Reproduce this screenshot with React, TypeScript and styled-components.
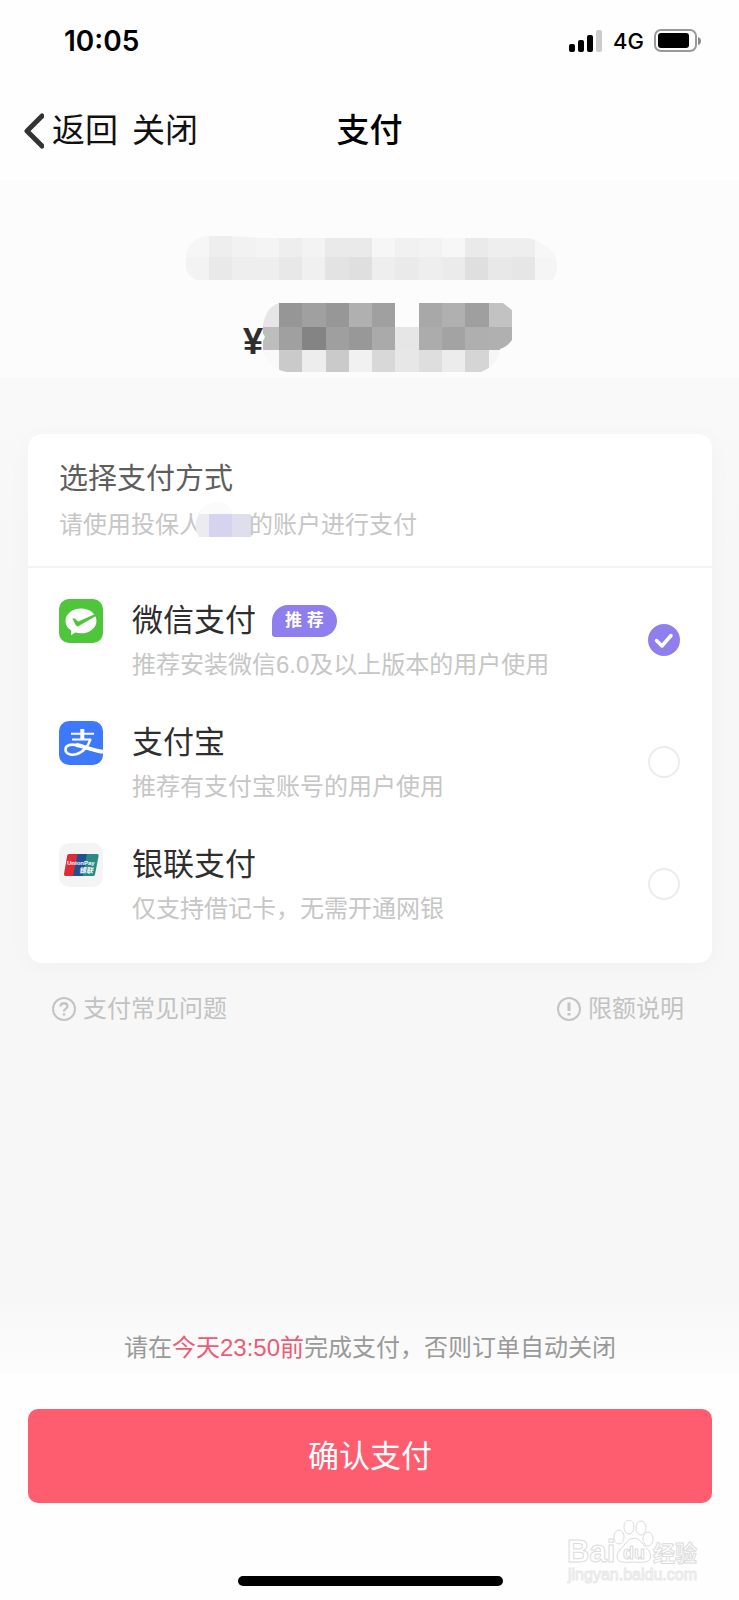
import React, { useState } from "react";
import styled, { createGlobalStyle } from "styled-components";

const GlobalStyle = createGlobalStyle`
  * { box-sizing: border-box; }
  body {
    margin: 0;
    background: #fefefe;
    font-family: "Liberation Sans", "Noto Sans CJK SC", sans-serif;
    color: #2e2e2e;
  }
  h1, h2, p { margin: 0; font-weight: 400; }
`;

const Page = styled.div`
  position: relative;
  display: flex;
  flex-direction: column;
  min-height: 100vh;
`;

const StatusBar = styled.div`
  display: flex;
  align-items: center;
  justify-content: space-between;
  height: 82px;
  padding: 0 38px 0 64px;
  color: #000;
  font-family: Inter, sans-serif;
`;

const Clock = styled.time`
  font-size: 28px;
  line-height: 32px;
  font-weight: 600;
`;

const StatusIcons = styled.div`
  display: flex;
  align-items: center;
  gap: 10px;
  font-size: 22px;
  line-height: 32px;
  font-weight: 500;
`;

const NavBar = styled.nav`
  display: grid;
  grid-template-columns: 1fr auto 1fr;
  align-items: center;
  height: 98px;
  padding: 0 24px;
  color: #111;
`;

const NavActions = styled.div`
  display: flex;
  gap: 14px;
`;

const NavButton = styled.button`
  display: flex;
  align-items: center;
  gap: 8px;
  padding: 0;
  border: 0;
  background: none;
  color: inherit;
  font: inherit;
  font-size: 33px;
  line-height: 48px;
`;

const Title = styled.h1`
  font-size: 33px;
  line-height: 48px;
  font-weight: 500;
  color: #000;
`;

const Summary = styled.header`
  display: flex;
  flex-direction: column;
  align-items: center;
  gap: 17px;
  height: 198px;
  padding: 56px 0 0 3px;
  background: #fcfcfc;
  > * { flex: none; }
`;

const Amount = styled.div`
  display: flex;
  align-items: center;
  padding-right: 12px;
  margin-left: 25px;
  font-size: 36px;
  line-height: 70px;
  font-weight: 700;
  span { padding-top: 10px; }
`;

const Body = styled.main`
  display: flex;
  flex: 1;
  flex-direction: column;
  padding: 56px 27px 0 28px;
  background: linear-gradient(#f9f9f9, #f7f7f7 20%, #f7f7f7 92%, #fcfcfc);
`;

const Card = styled.section`
  border-radius: 14px;
  background: #fff;
  box-shadow: 0 4px 24px rgba(0, 0, 0, 0.03);
`;

const CardHead = styled.div`
  height: 134px;
  padding: 22px 31px 0;
  border-bottom: 2px solid #f3f3f3;
`;

const CardTitle = styled.h2`
  font-size: 29px;
  line-height: 46px;
  color: #5e5e5e;
`;

const Hint = styled.p`
  display: flex;
  align-items: center;
  font-size: 24px;
  line-height: 44px;
  color: #c6c6c6;
`;

const NameMask = styled.svg`
  flex: none;
  margin: 0 -6px 0 -8px;
`;

const MethodList = styled.div`
  padding: 11px 0 18px;
`;

const MethodRow = styled.label`
  display: flex;
  align-items: flex-start;
  height: 122px;
  padding: 20px 32px 0 31px;
`;

const MethodText = styled.span`
  display: flex;
  flex: 1;
  flex-direction: column;
  margin-left: 29px;
`;

const MethodName = styled.span`
  display: flex;
  align-items: center;
  gap: 16px;
  font-size: 31px;
  line-height: 44px;
  color: #2e2e2e;
`;

const MethodNote = styled.span`
  font-size: 24px;
  line-height: 44px;
  color: #c6c6c6;
`;

const Badge = styled.span`
  padding: 0 13px;
  border-radius: 16px 16px 16px 3px;
  background: #8f7fee;
  color: #fff;
  font-size: 17px;
  line-height: 32px;
  font-weight: 700;
`;

const RadioBox = styled.span`
  display: grid;
  align-self: flex-start;
  margin-top: 25px;
  > * { grid-area: 1 / 1; }
  svg { pointer-events: none; }
`;

const Radio = styled.input`
  appearance: none;
  width: 32px;
  height: 32px;
  margin: 0;
  border: 2px solid #ececec;
  border-radius: 50%;
  background: #fff;
  &:checked {
    border-color: #8f7fee;
    background: #8f7fee;
  }
`;

const HelpLinks = styled.div`
  display: flex;
  justify-content: space-between;
  padding: 24px 28px 0 24px;
`;

const HelpLink = styled.a`
  display: flex;
  align-items: center;
  gap: 7px;
  color: #c2c2c2;
  font-size: 24px;
  line-height: 44px;
  text-decoration: none;
`;

const Notice = styled.p`
  margin-top: auto;
  padding-bottom: 8px;
  text-align: center;
  font-size: 24px;
  line-height: 36px;
  color: #999;
  strong {
    font-weight: 400;
    color: #ee5b72;
  }
`;

const Footer = styled.footer`
  display: flex;
  flex-direction: column;
  align-items: center;
  gap: 73px;
  padding: 35px 27px 14px 28px;
`;

const PayButton = styled.button`
  width: 100%;
  height: 94px;
  padding: 2px 0 0;
  border: 0;
  border-radius: 10px;
  background: #fe5d70;
  color: #fff;
  font: inherit;
  font-size: 31px;
  line-height: 44px;
`;

const HomeIndicator = styled.div`
  width: 265px;
  height: 10px;
  border-radius: 5px;
  background: #000;
`;

const Watermark = styled.svg`
  position: absolute;
  right: 34px;
  bottom: 10px;
`;

const CELL = 23;

type MosaicProps = {
  width: number;
  height: number;
  lead: number;
  rows: { y: number; h: number; cells: string[] }[];
  outline: string;
  id: string;
};

function Mosaic({ width, height, lead, rows, outline, id }: MosaicProps) {
  return (
    <svg width={width} height={height} viewBox={`0 0 ${width} ${height}`} aria-hidden="true" shapeRendering="crispEdges">
      <clipPath id={id}>
        <path d={outline} />
      </clipPath>
      <g clipPath={`url(#${id})`}>
        {rows.map((row) =>
          row.cells.map((fill, i) => (
            <rect
              key={`${row.y}-${i}`}
              x={i === 0 ? 0 : lead + (i - 1) * (CELL + 0.28)}
              y={row.y}
              width={CELL + 1}
              height={row.h}
              fill={fill}
            />
          ))
        )}
      </g>
    </svg>
  );
}

const productRows = [
  { y: 0, h: 21, cells: ["#f6f6f6", "#eeeeee", "#f2f2f2", "#f4f4f4", "#eeeeee", "#f3f3f3", "#eaeaea", "#eaeaea", "#f6f6f6", "#f1f1f1", "#f3f3f3", "#f7f7f7", "#eaeaea", "#eeeeee", "#eeeeee", "#f7f7f7"] },
  { y: 21, h: 24, cells: ["#f3f3f3", "#e9e9e9", "#eeeeee", "#eeeeee", "#e8e8e8", "#f0f0f0", "#e3e3e3", "#dfdfdf", "#eeeeee", "#eaeaea", "#eeeeee", "#ebebeb", "#dfdfdf", "#e8e8e8", "#e6e6e6", "#f5f5f5"] },
];

const priceRows = [
  { y: 0, h: 24, cells: ["#e6e6e6", "#969696", "#a0a0a0", "#979797", "#b0b0b0", "#a0a0a0", "#fcfcfc", "#a8a8a8", "#b0b0b0", "#9f9f9f", "#c2c2c2"] },
  { y: 24, h: 23, cells: ["#bdbdbd", "#a0a0a0", "#848484", "#9f9f9f", "#989898", "#aaaaaa", "#e6e6e6", "#acacac", "#a3a3a3", "#afafaf", "#b0b0b0"] },
  { y: 47, h: 23, cells: ["#f9f9f9", "#cacaca", "#ededed", "#cacaca", "#f1f1f1", "#d8d8d8", "#e7e7e7", "#dedede", "#ececec", "#d5d5d5", "#f6f6f6"] },
];

const WechatIcon = () => (
  <svg width="44" height="44" viewBox="0 0 44 44" aria-hidden="true">
    <rect width="44" height="44" rx="10" fill="#4fc53c" />
    <path d="M22 9.5c8.600 0 15.500 5.400 15.500 12.400S30.600 34.300 22 34.300c-2 0-3.900-.3-5.600-.8L12 36.200l.3-4.700C8.700 29.300 6.500 25.800 6.500 21.900 6.500 14.900 13.400 9.500 22 9.500z" fill="#fff" />
    <path d="M13.500 19.800c.8-1 1.700-.6 2.500 0l3.300 2.600 17.500-7.700.6 2-17.700 10.300c-1.200.7-2.200.4-2.800-.7z" fill="#4fc53c" />
  </svg>
);

const AlipayIcon = () => (
  <svg width="44" height="44" viewBox="0 0 44 44" aria-hidden="true">
    <rect width="44" height="44" rx="10" fill="#3f79fb" />
    <g fill="none" stroke="#fff">
      <path d="M12 12.800H35M13 18.500H32" strokeWidth="2" />
      <path d="M23.300 8V18.500" strokeWidth="4" />
      <path d="M31.500 18C29.500 25 24 31.500 17 33.300C11 34.700 6.500 32.500 6.500 28.500C6.500 24 12.500 22.500 19 24.500" strokeWidth="2.600" />
      <path d="M17 23.800C26 26 35 29.500 44 30.800" strokeWidth="4" />
    </g>
  </svg>
);

const UnionPayIcon = () => (
  <svg width="44" height="44" viewBox="0 0 44 44" aria-hidden="true">
    <rect width="44" height="44" rx="10" fill="#f5f4f4" />
    <path d="M10 11H20L15.500 33H6.500Q4.600 33 5 31L8.200 12.500Q8.500 11 10 11z" fill="#e02b35" />
    <path d="M18.500 11H29L24.500 33H14z" fill="#20508f" />
    <path d="M28 11H38Q40 11 39.600 13L36 31.500Q35.700 33 34 33H23.500z" fill="#2a8a86" />
    <text x="8" y="22" fontSize="6" fontWeight="700" fill="#fff">UnionPay</text>
    <text x="20" y="30" fontSize="7" fontWeight="700" fontStyle="italic" fill="#fff">银联</text>
  </svg>
);

const methods = [
  { id: "wechat", name: "微信支付", note: "推荐安装微信6.0及以上版本的用户使用", icon: <WechatIcon />, badge: "推 荐" },
  { id: "alipay", name: "支付宝", note: "推荐有支付宝账号的用户使用", icon: <AlipayIcon /> },
  { id: "unionpay", name: "银联支付", note: "仅支持借记卡，无需开通网银", icon: <UnionPayIcon /> },
];

export default function App() {
  const [selected, setSelected] = useState("wechat");

  return (
    <>
      <GlobalStyle />
      <Page>
        <StatusBar>
          <Clock>10:05</Clock>
          <StatusIcons>
            <svg width="34" height="22" viewBox="0 0 34 22" aria-hidden="true">
              <rect x="0" y="14" width="6" height="8" rx="2" />
              <rect x="9" y="10" width="6" height="12" rx="2" />
              <rect x="18" y="5" width="6" height="17" rx="2" />
              <rect x="27" y="0" width="6" height="22" rx="2" fill="#ccc" />
            </svg>
            4G
            <svg width="47" height="24" viewBox="0 0 47 24" aria-hidden="true">
              <rect x="1" y="1" width="41" height="21" rx="6" fill="none" stroke="#999" strokeWidth="2" />
              <rect x="4" y="4" width="31" height="15" rx="3" />
              <path d="M44 8q3 1 3 4t-3 4z" fill="#888" />
            </svg>
          </StatusIcons>
        </StatusBar>

        <NavBar>
          <NavActions>
            <NavButton type="button">
              <svg width="20" height="36" viewBox="0 0 20 36" aria-hidden="true">
                <path d="M18 3L3 18L18 33" fill="none" stroke="#333" strokeWidth="5" strokeLinecap="round" strokeLinejoin="round" />
              </svg>
              返回
            </NavButton>
            <NavButton type="button">关闭</NavButton>
          </NavActions>
          <Title>支付</Title>
        </NavBar>

        <Summary>
          <Mosaic
            id="product-mask"
            width={371}
            height={44}
            lead={23}
            rows={productRows}
            outline="M20 0H45L75 2H342Q352 4 356 8Q371 14 371 29Q371 40 366 44H11Q0 40 0 30V18Q4 2 20 0z"
          />
          <Amount>
            <span>¥</span>
            <Mosaic
              id="price-mask"
              width={249}
              height={69}
              lead={16}
              rows={priceRows}
              outline="M16 0H240L249 7V37Q244 44 237 46Q235 62 218 69H24Q4 66 0 46V38L2 34L0 30V22Q3 4 16 0z"
            />
          </Amount>
        </Summary>

        <Body>
          <Card>
            <CardHead>
              <CardTitle>选择支付方式</CardTitle>
              <Hint>
                请使用投保人
                <NameMask width="60" height="46" viewBox="0 0 60 46" aria-hidden="true">
                  <path d="M2 12Q10 0 22 0Q34 0 38 12z" fill="#fbfbfb" />
                  <path d="M4 12H14V35H4Q-3 23 4 12z" fill="#ecebf2" />
                  <path d="M14 12H37V35H14z" fill="#d6d3ee" />
                  <path d="M37 12H55L58 16V32L56 35H37z" fill="#dfdeed" />
                </NameMask>
                的账户进行支付
              </Hint>
            </CardHead>
            <MethodList role="radiogroup" aria-label="选择支付方式">
              {methods.map((m) => (
                <MethodRow key={m.id}>
                  {m.icon}
                  <MethodText>
                    <MethodName>
                      {m.name}
                      {m.badge && <Badge>{m.badge}</Badge>}
                    </MethodName>
                    <MethodNote>{m.note}</MethodNote>
                  </MethodText>
                  <RadioBox>
                    <Radio type="radio" name="method" value={m.id} checked={selected === m.id} onChange={() => setSelected(m.id)} />
                    {selected === m.id && (
                      <svg width="32" height="32" viewBox="0 0 32 32" aria-hidden="true">
                        <path d="M8.500 16.500L14 22L23 11.500" fill="none" stroke="#fff" strokeWidth="3.500" strokeLinecap="round" strokeLinejoin="round" />
                      </svg>
                    )}
                  </RadioBox>
                </MethodRow>
              ))}
            </MethodList>
          </Card>

          <HelpLinks>
            <HelpLink href="#faq">
              <svg width="24" height="24" viewBox="0 0 24 24" fill="none" stroke="#c4c4c4" strokeWidth="2" aria-hidden="true">
                <circle cx="12" cy="12" r="11" />
                <path d="M8.500 9.500Q8.800 6.200 12 6.200Q15.400 6.200 15.400 9.200Q15.400 11 13.500 12Q12 12.800 12 14.500M12 16.200V18.600" strokeWidth="2.400" />
              </svg>
              支付常见问题
            </HelpLink>
            <HelpLink href="#limits">
              <svg width="24" height="24" viewBox="0 0 24 24" fill="none" stroke="#c4c4c4" strokeWidth="2" aria-hidden="true">
                <circle cx="12" cy="12" r="11" />
                <path d="M12 5.500V14M12 16V18.500" strokeWidth="3" />
              </svg>
              限额说明
            </HelpLink>
          </HelpLinks>

          <Notice>
            请在<strong>今天23:50前</strong>完成支付，否则订单自动关闭
          </Notice>
        </Body>

        <Footer>
          <PayButton type="button">确认支付</PayButton>
          <HomeIndicator />
        </Footer>

        <Watermark width="140" height="70" viewBox="0 0 140 70" fill="#fff" stroke="#dcdcdc" strokeWidth="1" aria-hidden="true">
          <text x="2" y="42" fontSize="31" fontWeight="700" fontFamily="Liberation Sans">Bai</text>
          <ellipse cx="54" cy="17" rx="5" ry="7" />
          <ellipse cx="64" cy="7" rx="5" ry="7" />
          <ellipse cx="76" cy="8" rx="5" ry="7" />
          <ellipse cx="83" cy="19" rx="5" ry="7" />
          <path d="M69 18Q74 18 78 24L84 31Q88 38 83 41Q80 43 69 42Q58 43 54 41Q50 37 54 31L60 24Q64 18 69 18z" />
          <text x="58" y="39" fontSize="18" fontWeight="700" fontFamily="Liberation Sans">du</text>
          <text x="88" y="41" fontSize="22" fontWeight="700" fontFamily="Noto Sans CJK SC">经验</text>
          <text x="3" y="60" fontSize="16" fontFamily="Liberation Sans" stroke="#e8e8e8">jingyan.baidu.com</text>
        </Watermark>
      </Page>
    </>
  );
}
